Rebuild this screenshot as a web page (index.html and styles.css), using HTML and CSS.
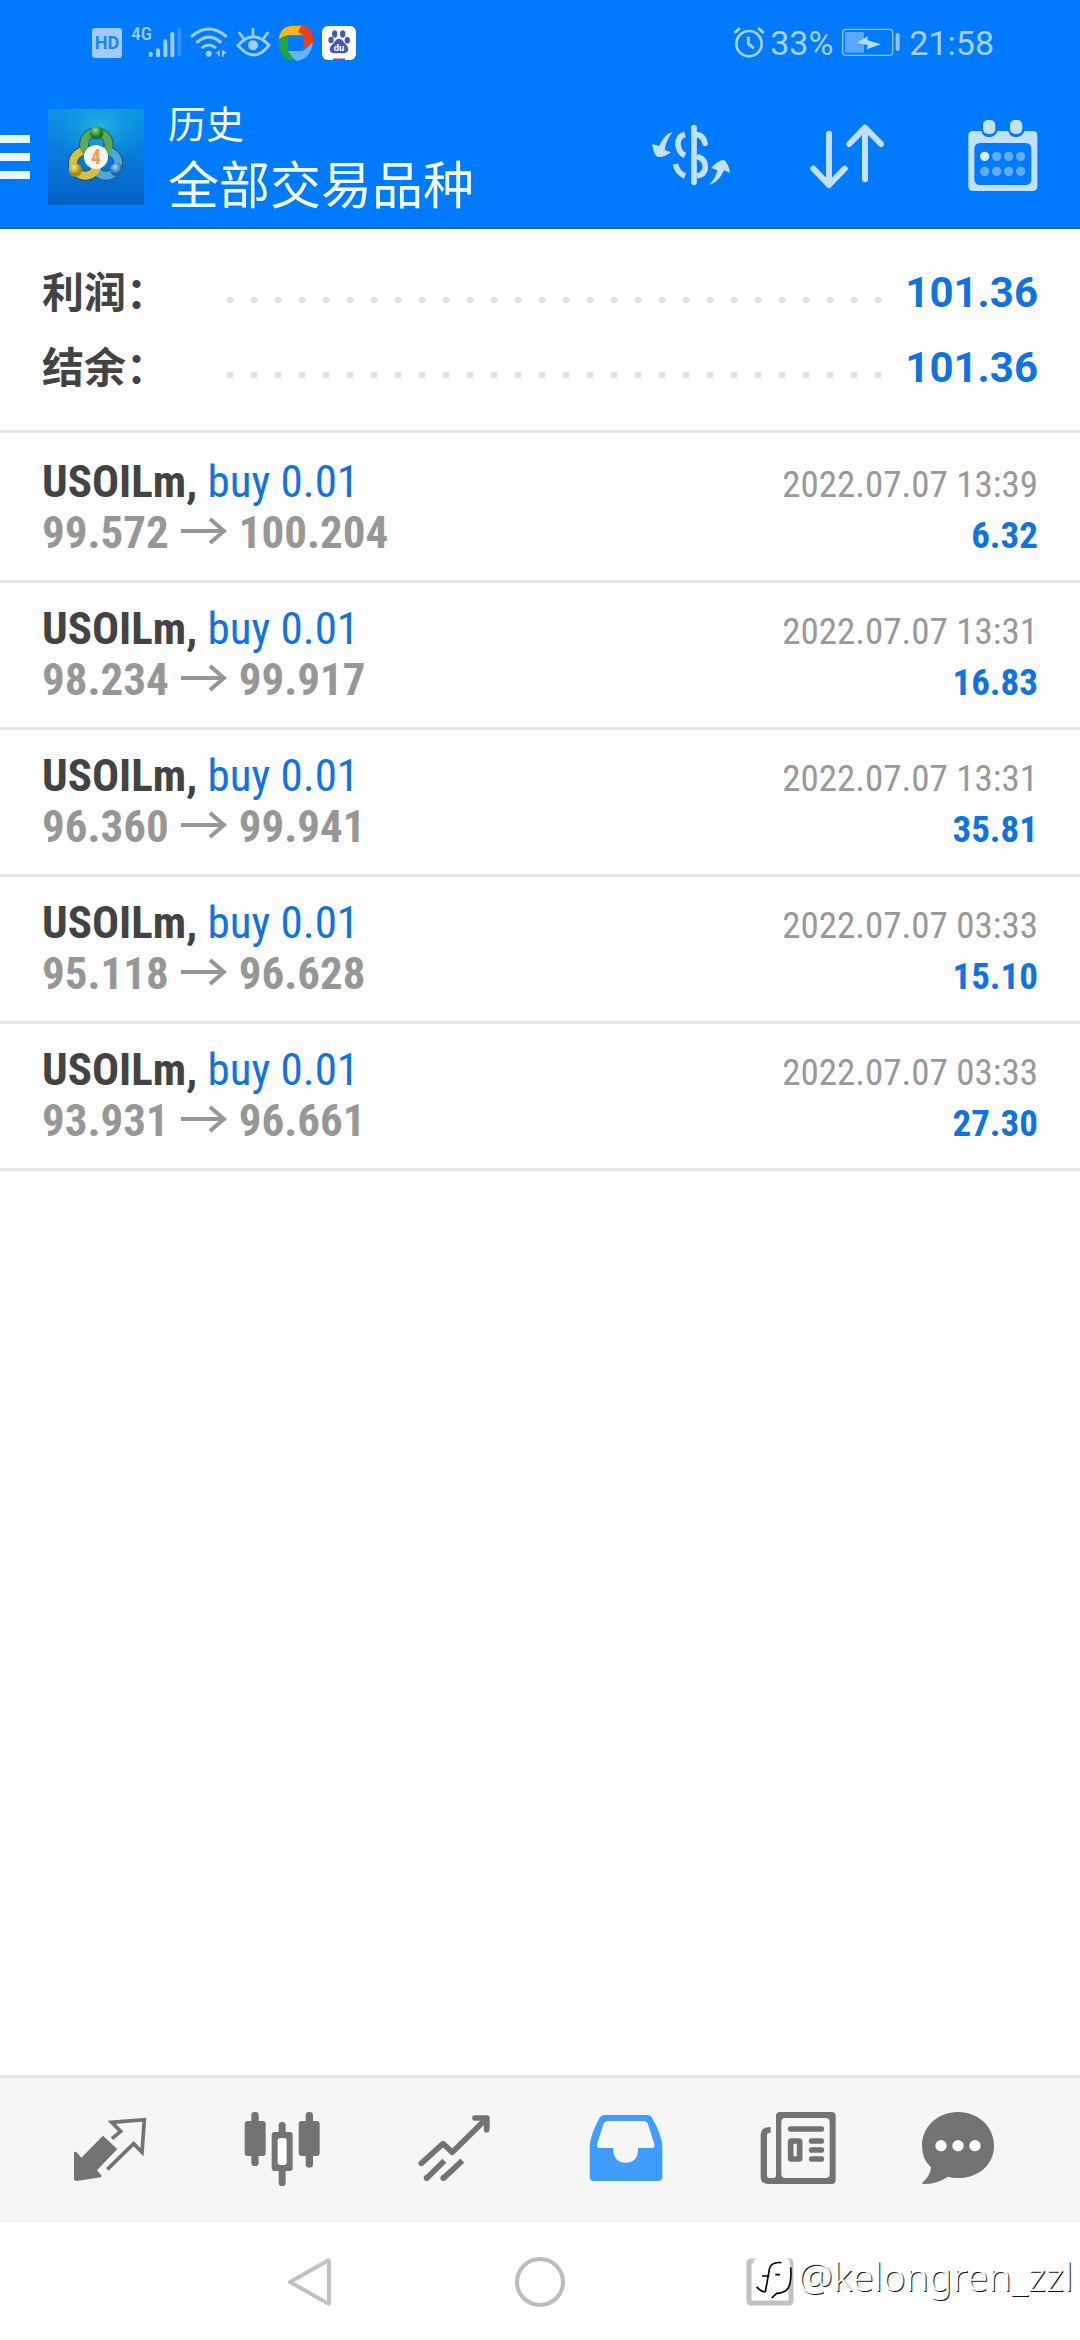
FILE: index.html
```html
<!DOCTYPE html>
<html lang="zh-CN">
<head>
<meta charset="utf-8">
<meta name="viewport" content="width=device-width, initial-scale=1">
<title>历史</title>
<link rel="stylesheet" href="styles.css">
</head>
<body>
<div class="app">
  <div class="status">
    <div class="status-left">
      <svg width="34" height="40" viewBox="60 39 102 120"><rect x="66" y="54" width="90" height="90" rx="10" fill="#9fcbff"/><text x="111" y="118" text-anchor="middle" font-size="54" font-weight="700" class="svg-text" fill="#1a84f5">HD</text></svg>
      <svg width="52" height="40" viewBox="186 39 156 120"><text x="187" y="91" font-size="57" font-weight="500" class="svg-narrow" fill="#9fcbff">4G</text><g stroke="#9fcbff" stroke-width="12" stroke-linecap="round"><path d="M245 131v4M267 121v15M289 94v42M310 72v64"/></g><path d="M331 54v84" stroke="#2f92ff" stroke-width="11"/></svg>
      <svg width="39" height="40" viewBox="363 39 117 120"><g fill="none" stroke="#9fcbff" stroke-width="9" stroke-linecap="round"><path d="M369 78q51-42 101 0M385 96q35-29 69 0M401 112q19-14 37 0"/></g><circle cx="419" cy="131" r="9" fill="#9fcbff"/><path d="M452 119v20h-5v-8h-9zM459 119l15 10-10 3v8h-5z" fill="#9fcbff"/></svg>
      <svg width="35" height="40" viewBox="501 39 105 120"><path d="M507 106q46-52 93 0q-46 58-93 0z" fill="none" stroke="#9fcbff" stroke-width="9"/><circle cx="552" cy="106" r="15" fill="#9fcbff"/><path d="M552 57v20M511 69l11 14M596 69l-11 14" stroke="#9fcbff" stroke-width="8" stroke-linecap="round"/></svg>
      <svg width="36" height="40" viewBox="630 39 108 120"><path d="M633 85Q637 50 672 47H700Q719 49 727 66L710 76H660Q644 80 642 108Z" fill="#fdb515"/><path d="M700 47Q735 50 735 90Q736 112 722 129L706 110V76L690 66Z" fill="#e8401c"/><path d="M633 88Q632 148 668 151H688L670 122H660V76Q645 78 633 88Z" fill="#1fa838"/><path d="M660 123H700Q715 119 727 102L734 100Q728 147 686 153Q672 143 660 123Z" fill="#62b5ff"/></svg>
      <svg width="36" height="40" viewBox="756 39 108 120"><rect x="759" y="48" width="102" height="102" rx="18" fill="#fff"/><g fill="#4658b4"><ellipse cx="797" cy="72" rx="8" ry="11"/><ellipse cx="821" cy="72" rx="8" ry="11"/><ellipse cx="786" cy="90" rx="8" ry="10"/><ellipse cx="835" cy="91" rx="8" ry="10"/><path d="M810 86q9 0 16 12q12 11 12 21q-2 14-28 10q-26 4-28-10q0-10 13-21q6-12 15-12z"/></g><text x="810" y="124" text-anchor="middle" font-size="28" font-weight="700" class="svg-text" fill="#fff">du</text><path d="M792 148h20" stroke="#df3346" stroke-width="5"/><path d="M812 148h16" stroke="#4658b4" stroke-width="5"/></svg>
    </div>
    <div class="status-right">
      <svg width="32" height="40" viewBox="66 39 96 120"><g fill="none" stroke="#a6d0ff" stroke-width="8"><circle cx="114" cy="101" r="38"/><path d="M112 80v21l16 14M70 69l17-15M158 69l-17-15" stroke-width="9"/></g></svg>
      <span>33%</span>
      <svg class="battery" width="60" height="40" viewBox="390 39 180 120"><rect x="395" y="58" width="150" height="78" rx="10" fill="none" stroke="#8fc4ff" stroke-width="4"/><rect x="402" y="66" width="57" height="62" rx="4" fill="#58a8ff"/><path d="M437 99l33-20v12l40 12-42 15 2-13z" fill="#b5d9ff"/><path d="M560 75v42" stroke="#8fc4ff" stroke-width="12" stroke-linecap="round"/></svg>
      <span>21:58</span>
    </div>
  </div>

  <header class="header">
    <button class="menu" aria-label="菜单"><i></i><i></i><i></i></button>
    <svg class="logo" width="96" height="96" viewBox="24 27 288 288">
      <defs>
        <linearGradient id="bg" x1="0" y1="0" x2="0" y2="1"><stop offset="0" stop-color="#0c93e6"/><stop offset="1" stop-color="#0560c6"/></linearGradient>
        <radialGradient id="glow"><stop offset="0" stop-color="#25bde0" stop-opacity=".8"/><stop offset="1" stop-color="#109ae0" stop-opacity="0"/></radialGradient>
        <radialGradient id="gg" cx=".4" cy=".3"><stop offset="0" stop-color="#8fdc93"/><stop offset="1" stop-color="#17752c"/></radialGradient>
        <radialGradient id="yy" cx=".4" cy=".3"><stop offset="0" stop-color="#fff07c"/><stop offset="1" stop-color="#a58a0b"/></radialGradient>
        <radialGradient id="bb" cx=".4" cy=".3"><stop offset="0" stop-color="#a5dcff"/><stop offset="1" stop-color="#1567b5"/></radialGradient>
      </defs>
      <rect x="24" y="27" width="288" height="288" fill="url(#bg)"/>
      <ellipse cx="180" cy="80" rx="145" ry="115" fill="url(#glow)"/>
      <g fill="none" stroke="#174f4b" stroke-width="29"><circle cx="169" cy="134" r="37"/><circle cx="136" cy="190" r="37"/><circle cx="198" cy="190" r="37"/></g>
      <g fill="none" stroke-width="24"><circle cx="198" cy="190" r="37" stroke="#4fa5e0"/><circle cx="136" cy="190" r="37" stroke="#d3c044"/><circle cx="169" cy="134" r="37" stroke="#5aa95b"/></g>
      <circle cx="170" cy="99" r="20" fill="url(#gg)"/><circle cx="106" cy="210" r="20" fill="url(#yy)"/><circle cx="230" cy="209" r="20" fill="url(#bb)"/>
      <circle cx="168" cy="171" r="36" fill="#f4f4f2"/>
      <text x="168" y="191" text-anchor="middle" font-size="58" font-weight="700" class="svg-narrow" fill="#f39a4d">4</text>
    </svg>
    <div class="titles">
      <h1>历史</h1>
      <p>全部交易品种</p>
    </div>
    <div class="actions">
      <button aria-label="货币"><svg width="80" height="80" viewBox="90 81 240 240"><g fill="none" stroke="#c4e0ff" stroke-width="17"><path d="M219 113v164" stroke-linecap="round"/><path d="M192 133q-23 7-21 31 2 24 21 32M163 222q6 27 29 36"/><path d="M228 134q20 3 24 26" stroke-linecap="round"/><path d="M228 199q25 8 25 31t-25 28"/></g><path d="M155 126q-25 5-41 42l-20-6q2 28 15 39 22 2 41-14l-19-7q4-30 24-54zM264 285q20-20 25-44l-18-7q17-23 38-24 16 13 17 38l-17-7q-17 38-45 44z" fill="#c4e0ff"/></svg></button>
      <button aria-label="排序"><svg width="80" height="80" viewBox="558 81 240 240"><path d="M624 131v154M577 236l47 49 47-49M732 268V113M685 162l47-49 48 49" fill="none" stroke="#c4e0ff" stroke-width="18" stroke-linecap="round" stroke-linejoin="round"/></svg></button>
      <button aria-label="日期"><svg width="80" height="80" viewBox="1028 81 240 240"><path fill-rule="evenodd" d="M1058 123h25q4 18 23 18t25-18h33q4 18 23 18t25-18h25q14 0 14 14v152q0 14-14 14h-179q-14 0-14-14V137q0-14 14-14zM1080 159q-18 0-18 18v90q0 18 18 18h135q18 0 18-18v-90q0-18-18-18z" fill="#c4e0ff"/><rect x="1088" y="90" width="37" height="42" rx="15" fill="#c4e0ff"/><rect x="1169" y="90" width="37" height="42" rx="15" fill="#c4e0ff"/><circle cx="1093" cy="199" r="14" fill="#d5f0ff"/><g fill="#62acff"><circle cx="1129" cy="199" r="14"/><circle cx="1165" cy="199" r="14"/><circle cx="1201" cy="199" r="14"/><circle cx="1093" cy="244" r="14"/><circle cx="1129" cy="244" r="14"/><circle cx="1165" cy="244" r="14"/><circle cx="1201" cy="244" r="14"/></g></svg></button>
    </div>
  </header>

  <main class="content">
    <dl class="summary">
      <div class="sum-row"><dt>利润：</dt><dd class="dots"></dd><dd class="sum-value">101.36</dd></div>
      <div class="sum-row"><dt>结余：</dt><dd class="dots"></dd><dd class="sum-value">101.36</dd></div>
    </dl>
    <ul class="deals">
      <li>
        <div class="line"><span><b>USOILm,</b> <span class="side">buy 0.01</span></span><time>2022.07.07 13:39</time></div>
        <div class="line"><span class="prices">99.572<svg class="arrow" width="46" height="28" viewBox="0 0 46 28"><path d="M0 14h43M29 2l14 12-14 12" fill="none" stroke="#979797" stroke-width="4"/></svg>100.204</span><b class="profit">6.32</b></div>
      </li>
      <li>
        <div class="line"><span><b>USOILm,</b> <span class="side">buy 0.01</span></span><time>2022.07.07 13:31</time></div>
        <div class="line"><span class="prices">98.234<svg class="arrow" width="46" height="28" viewBox="0 0 46 28"><path d="M0 14h43M29 2l14 12-14 12" fill="none" stroke="#979797" stroke-width="4"/></svg>99.917</span><b class="profit">16.83</b></div>
      </li>
      <li>
        <div class="line"><span><b>USOILm,</b> <span class="side">buy 0.01</span></span><time>2022.07.07 13:31</time></div>
        <div class="line"><span class="prices">96.360<svg class="arrow" width="46" height="28" viewBox="0 0 46 28"><path d="M0 14h43M29 2l14 12-14 12" fill="none" stroke="#979797" stroke-width="4"/></svg>99.941</span><b class="profit">35.81</b></div>
      </li>
      <li>
        <div class="line"><span><b>USOILm,</b> <span class="side">buy 0.01</span></span><time>2022.07.07 03:33</time></div>
        <div class="line"><span class="prices">95.118<svg class="arrow" width="46" height="28" viewBox="0 0 46 28"><path d="M0 14h43M29 2l14 12-14 12" fill="none" stroke="#979797" stroke-width="4"/></svg>96.628</span><b class="profit">15.10</b></div>
      </li>
      <li>
        <div class="line"><span><b>USOILm,</b> <span class="side">buy 0.01</span></span><time>2022.07.07 03:33</time></div>
        <div class="line"><span class="prices">93.931<svg class="arrow" width="46" height="28" viewBox="0 0 46 28"><path d="M0 14h43M29 2l14 12-14 12" fill="none" stroke="#979797" stroke-width="4"/></svg>96.661</span><b class="profit">27.30</b></div>
      </li>
    </ul>
  </main>

  <nav class="tabs">
    <button aria-label="行情"><svg width="80" height="80" viewBox="30 60 240 240"><path d="M129 134L172 174 111 238 125 254 122 259 50 270Q42 270 42 262V182L50 184 64 200Z" fill="#737373"/><path d="M156 143L182 121 155 94 253 86 246 184 221 158 142 235" fill="none" stroke="#737373" stroke-width="11"/></svg></button>
    <button aria-label="图表"><svg width="80" height="80" viewBox="544 60 240 240"><g fill="#737373"><rect x="552" y="90" width="63" height="105" rx="9"/><rect x="572" y="63" width="22" height="162" rx="10"/><rect x="714" y="90" width="63" height="105" rx="9"/><rect x="735" y="63" width="22" height="167" rx="10"/><rect x="654" y="93" width="21" height="192" rx="10"/><rect x="633" y="123" width="63" height="117" rx="9"/></g><rect x="651" y="141" width="27" height="81" rx="8" fill="#fff"/></svg></button>
    <button aria-label="交易"><svg width="80" height="80" viewBox="1060 60 240 240"><g fill="none" stroke="#737373" stroke-width="17"><path d="M1082 217L1147 158 1175 184 1276 84" stroke-linecap="round" stroke-linejoin="round"/><path d="M1243 81h35v35" stroke-linecap="round" stroke-linejoin="round"/><path d="M1098 262L1151 209M1148 262L1205 209"/></g><path d="M1250 75h36v38z" fill="#737373"/><g fill="#737373"><circle cx="1098" cy="261" r="9"/><circle cx="1148" cy="261" r="9"/></g></svg></button>
    <button aria-label="历史" aria-current="page"><svg width="80" height="80" viewBox="50 60 240 240"><path fill-rule="evenodd" d="M104 72H235Q243 72 248 80Q277 130 279 166V258Q279 270 267 270H73Q61 270 61 258V166Q63 130 91 80Q96 72 104 72ZM116 90Q107 90 102 100L83 160Q81 171 91 171H132V180Q135 215 169 215T206 180V171H248Q258 171 255 160L236 100Q231 90 222 90Z" fill="#409cff"/></svg></button>
    <button aria-label="新闻"><svg width="80" height="80" viewBox="570 60 240 240"><path fill-rule="evenodd" d="M636 63H791Q803 63 803 75V267Q803 279 791 279H600Q578 279 578 257V128Q580 108 608 108V125Q597 125 597 132V254Q597 261 604 261H616Q624 261 624 253V75Q624 63 636 63ZM653 81Q640 81 640 94V248Q640 261 653 261H772Q785 261 785 248V94Q785 81 772 81Z" fill="#737373"/><g fill="none" stroke="#737373" stroke-width="17" stroke-linecap="round"><path d="M668 114H760M731 150H760M731 177H760M731 204H760"/><rect x="668" y="150" width="27" height="54" rx="2"/></g></svg></button>
    <button aria-label="消息"><svg width="80" height="80" viewBox="1044 60 240 240"><path d="M1164 63C1226 63 1272 108 1272 164S1226 261 1164 261Q1148 261 1134 257Q1102 279 1061 279Q1054 279 1059 273Q1082 253 1083 229Q1056 205 1056 164C1056 108 1102 63 1164 63Z" fill="#737373"/><g fill="#fff"><circle cx="1113" cy="164" r="17"/><circle cx="1164" cy="164" r="17"/><circle cx="1215" cy="164" r="17"/></g></svg></button>
  </nav>

  <div class="sysnav">
    <button aria-label="返回"><svg width="60" height="60" viewBox="0 0 60 60"><path d="M10 30L48 8.500Q49 8 49 10V50Q49 52 48 51.500Z" fill="none" stroke="#c2c2c2" stroke-width="4" stroke-linejoin="round"/></svg></button>
    <button aria-label="主屏幕"><svg width="60" height="60" viewBox="0 0 60 60"><circle cx="30" cy="30" r="23" fill="none" stroke="#bdbdbd" stroke-width="4"/></svg></button>
    <button aria-label="最近任务"><svg width="60" height="60" viewBox="0 0 60 60"><rect x="9" y="9" width="42" height="42" rx="2" fill="none" stroke="#c2c2c2" stroke-width="5"/></svg></button>
    <div class="watermark">
      <svg width="42" height="50" viewBox="60 45 126 150"><path d="M65 72Q118 42 172 72Q180 110 172 150Q160 166 140 170L120 188L112 172H98Q66 160 65 130Z" fill="#fff"/><path d="M148 80Q114 76 111 106L100 168M90 120H112M130 116H144M74 152Q84 166 100 168M176 94Q180 150 162 164Q146 172 134 172L119 186" fill="none" stroke="#000" stroke-width="5"/></svg>
      <span>@kelongren_zzl</span>
    </div>
  </div>
</div>
</body>
</html>
```
FILE: styles.css
```css
* { box-sizing: border-box; }

body {
  margin: 0;
  background: #fefefe;
  color: #434343;
  font-family: "Roboto Condensed", Roboto, "Noto Sans CJK SC", sans-serif;
}

button {
  display: flex;
  padding: 0;
  border: 0;
  background: none;
}

svg { display: block; flex: none; }
.svg-text { font-family: Roboto, sans-serif; }
.svg-narrow { font-family: "Roboto Condensed", Roboto, sans-serif; }

.app {
  display: flex;
  flex-direction: column;
  min-height: 100vh;
}

/* Status bar */
.status {
  display: flex;
  justify-content: space-between;
  align-items: center;
  height: 86px;
  padding: 0 86px 0 90px;
  background: #007aff;
  color: #a6d2ff;
  font: 34px/40px Roboto, sans-serif;
}
.status-left { display: flex; gap: 7px; }
.status-right { display: flex; align-items: center; gap: 5px; }
.battery { margin: 0 3px; }

/* App header */
.header {
  display: flex;
  align-items: center;
  height: 143px;
  padding-right: 37px;
  border-bottom: 2px solid #1769ac;
  background: #007aff;
  color: #f0fbff;
  font-family: "Noto Sans CJK SC", sans-serif;
}
.menu {
  flex-direction: column;
  gap: 10px;
  width: 30px;
}
.menu i {
  width: 100%;
  height: 8px;
  background: #e8f6ff;
}
.logo { margin: 0 24px 0 18px; }
.titles { flex: 1; padding-bottom: 4px; }
.titles h1,
.titles p {
  margin: 0;
  font-weight: 400;
}
.titles h1 { font-size: 38px; line-height: 54px; }
.titles p { font-size: 51px; line-height: 66px; }
.actions { display: flex; gap: 76px; }

/* Totals */
.content { flex: 1; }
.summary {
  margin: 0;
  padding: 26px 42px 25px;
  border-bottom: 3px solid #e6e6e6;
}
.sum-row {
  display: flex;
  align-items: center;
  height: 75px;
}
.sum-row dt {
  width: 176px;
  padding-bottom: 5px;
  font: 700 42px/60px "Noto Sans CJK SC", sans-serif;
}
.sum-row dd { margin: 0; }
.dots {
  flex: 1;
  height: 24px;
  background: radial-gradient(circle at 12px 19px, #e2e2e2 3px, transparent 4px) 0 0 / 24px 24px repeat-x;
}
.sum-value {
  padding-left: 14px;
  color: #1073e0;
  font: 700 42px/60px Roboto, sans-serif;
}

/* Deals */
.deals {
  margin: 0;
  padding: 3px 0 0;
  list-style: none;
  font-size: 45px;
  line-height: 48px;
}
.deals li {
  padding: 22px 42px 20px;
  border-bottom: 3px solid #e6e6e6;
}
.line {
  display: flex;
  justify-content: space-between;
  align-items: baseline;
  height: 51px;
}
.side { color: #1073e0; }
.prices {
  color: #979797;
  font-weight: 700;
}
.arrow {
  display: inline-block;
  margin: 0 12px;
  vertical-align: 3px;
}
.line time {
  color: #999;
  font-size: 37px;
}
.profit {
  color: #1073e0;
  font-size: 37px;
}

/* Tab bar */
.tabs {
  display: grid;
  grid-template-columns: repeat(5, 172fr) 148fr;
  justify-items: center;
  align-items: center;
  height: 148px;
  padding: 0 48px 0 24px;
  border-top: 3px solid #e3e5e4;
  background: #f7f6f7;
}

/* System navigation */
.sysnav {
  position: relative;
  display: flex;
  justify-content: center;
  align-items: center;
  gap: 170px;
  height: 117px;
}
.watermark {
  position: absolute;
  right: 7px;
  top: 28px;
  display: flex;
  align-items: center;
  gap: 4px;
  color: #fff;
  font: 300 39px/50px "Noto Sans", sans-serif;
  text-shadow: 1px 1px 0 #111;
}
```
